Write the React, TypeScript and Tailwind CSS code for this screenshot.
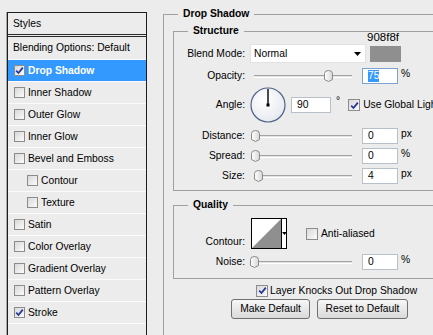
import React from "react";

function Check({ checked = false, big = false }: { checked?: boolean; big?: boolean }) {
  return (
    <div
      className={
        (big ? "w-[12px] h-[12px] " : "w-[11px] h-[11px] ") +
        "shrink-0 border border-[#8c8c8c] bg-gradient-to-br from-[#d9d9d9] to-[#fbfbfb] flex items-center justify-center"
      }
    >
      {checked && (
        <svg width="9" height="9" viewBox="0 0 9 9">
          <path d="M1.2 4.6 L3.5 7 L7.8 1.6" fill="none" stroke="#23389a" strokeWidth="1.8" />
        </svg>
      )}
    </div>
  );
}

function Row({
  label,
  checked = false,
  nested = false,
  active = false,
}: {
  label: string;
  checked?: boolean;
  nested?: boolean;
  active?: boolean;
}) {
  return (
    <div
      className={
        "h-[22px] flex items-center gap-[3px] border-b border-[#fbfbfb] " +
        (nested ? "pl-[19px] " : "pl-[6px] ") +
        (active ? "bg-[#3399ff] text-white font-bold" : "")
      }
    >
      <Check checked={checked} />
      <span>{label}</span>
    </div>
  );
}

function Slider({ thumb }: { thumb: number }) {
  return (
    <div className="relative w-[107px] h-[14px] shrink-0">
      <div className="absolute left-[4px] right-[5px] top-[6px] h-[3px] border-t border-[#a3a3a3] bg-[#e2e2e2] border-b border-b-white" />
      <svg
        className="absolute top-[1px]"
        style={{ left: thumb - 4.5 }}
        width="9"
        height="12"
        viewBox="0 0 9 12"
      >
        <defs>
          <linearGradient id="tg" x1="0" y1="0" x2="1" y2="0">
            <stop offset="0" stopColor="#ffffff" />
            <stop offset="1" stopColor="#d8d8d8" />
          </linearGradient>
        </defs>
        <path
          d="M0.5 3.5 Q0.5 0.5 4.5 0.5 Q8.5 0.5 8.5 3.5 L8.5 9.5 L4.5 11.5 L0.5 9.5 Z"
          fill="url(#tg)"
          stroke="#8a8a8a"
          strokeWidth="1"
        />
      </svg>
    </div>
  );
}

function Field({ value, w = "w-[36px]", focus = false }: { value: string; w?: string; focus?: boolean }) {
  return (
    <div
      className={
        w +
        " h-[16px] shrink-0 bg-white border flex items-center pl-[5px] " +
        (focus ? "border-[#7da2ce]" : "border-[#b8c0ca]")
      }
    >
      {focus ? <span className="bg-[#3399ff] text-white leading-[12px]">{value}</span> : <span>{value}</span>}
    </div>
  );
}

function Label({ children }: { children: React.ReactNode }) {
  return <div className="w-[72px] shrink-0 text-right pr-[1px]">{children}</div>;
}

export default function App() {
  return (
    <div className="w-[433px] h-[335px] overflow-hidden bg-[#ececec] flex text-[10.3px] leading-[12px] text-black font-['Liberation_Sans',Arial,sans-serif]">
      {/* Styles list */}
      <div className="ml-[7px] mt-[12px] w-[140px] h-[340px] shrink-0 border border-[#1e1e1e] shadow-[-1px_0_0_#a8a8a8]">
        <div className="h-[24px] flex items-center pl-[5px] border-b-[3px] border-double border-[#2a2a2a]">Styles</div>
        <div className="h-[23px] flex items-center pl-[5px] border-b border-[#fbfbfb]">Blending Options: Default</div>
        <Row label="Drop Shadow" checked active />
        <Row label="Inner Shadow" />
        <Row label="Outer Glow" />
        <Row label="Inner Glow" />
        <Row label="Bevel and Emboss" />
        <Row label="Contour" nested />
        <Row label="Texture" nested />
        <Row label="Satin" />
        <Row label="Color Overlay" />
        <Row label="Gradient Overlay" />
        <Row label="Pattern Overlay" />
        <Row label="Stroke" checked />
        <div className="h-[22px]" />
      </div>

      {/* Right side */}
      <div className="ml-[16px] w-[330px] shrink-0">
        <fieldset className="mt-[8px] border-t border-l border-[#a0a0a0] min-w-0 h-[340px]">
          <legend className="ml-[14px] px-[5px] font-bold leading-[12px]">Drop Shadow</legend>

          {/* Structure */}
          <fieldset className="ml-[9px] mt-[5px] w-[310px] border border-[#a0a0a0] pt-[7px] pb-[6px] min-w-0">
            <legend className="ml-[14px] px-[5px] font-bold leading-[12px]">Structure</legend>

            <div className="flex items-center h-[19px]">
              <Label>Blend Mode:</Label>
              <div className="ml-[4px] w-[116px] h-[19px] bg-white border border-[#e2e2e2] flex items-center justify-between pl-[3px] pr-[4px]">
                <span>Normal</span>
                <svg width="7" height="4" viewBox="0 0 7 4">
                  <path d="M0 0 L7 0 L3.5 4 Z" fill="#000" />
                </svg>
              </div>
              <div className="relative ml-[4px] w-[31px] h-[16px] bg-[#908f8f]">
                <span className="absolute left-[-3px] top-[-15px] text-[11.5px] leading-[12px]">908f8f</span>
              </div>
            </div>

            <div className="flex items-center h-[16px] mt-[5px]">
              <Label>Opacity:</Label>
              <div className="ml-[4px] flex items-center">
                <Slider thumb={78} />
                <div className="ml-[5px]">
                  <Field value="75" focus />
                </div>
                <span className="ml-[3px] self-start">%</span>
              </div>
            </div>

            <div className="flex items-center h-[36px] mt-[3px]">
              <Label>Angle:</Label>
              <svg className="ml-[4px] shrink-0" width="36" height="36" viewBox="0 0 36 36">
                <defs>
                  <radialGradient id="dial" cx="0.4" cy="0.35" r="0.7">
                    <stop offset="0" stopColor="#ffffff" />
                    <stop offset="1" stopColor="#e4e8ee" />
                  </radialGradient>
                </defs>
                <circle cx="18" cy="18" r="17" fill="url(#dial)" stroke="#4d6086" strokeWidth="1.2" />
                <line x1="18" y1="18" x2="18" y2="2" stroke="#000" strokeWidth="1.4" />
                <rect x="16.5" y="16.5" width="3" height="3" fill="#000" />
              </svg>
              <div className="ml-[5px]">
                <Field value="90" w="w-[40px]" />
              </div>
              <span className="ml-[5px] self-start mt-[8px]">°</span>
              <div className="ml-[8px] flex items-center gap-[3px] whitespace-nowrap">
                <Check checked big />
                <span>Use Global Light</span>
              </div>
            </div>

            <div className="flex items-center h-[16px] mt-[5px]">
              <Label>Distance:</Label>
              <div className="ml-[4px] flex items-center">
                <Slider thumb={5} />
                <div className="ml-[5px]">
                  <Field value="0" />
                </div>
                <span className="ml-[3px] self-start">px</span>
              </div>
            </div>

            <div className="flex items-center h-[16px] mt-[4px]">
              <Label>Spread:</Label>
              <div className="ml-[4px] flex items-center">
                <Slider thumb={5} />
                <div className="ml-[5px]">
                  <Field value="0" />
                </div>
                <span className="ml-[3px] self-start">%</span>
              </div>
            </div>

            <div className="flex items-center h-[16px] mt-[4px]">
              <Label>Size:</Label>
              <div className="ml-[4px] flex items-center">
                <Slider thumb={8} />
                <div className="ml-[5px]">
                  <Field value="4" />
                </div>
                <span className="ml-[3px] self-start">px</span>
              </div>
            </div>
          </fieldset>

          {/* Quality */}
          <fieldset className="ml-[9px] mt-[8px] w-[310px] border border-[#a0a0a0] pt-[7px] pb-[8px] min-w-0">
            <legend className="ml-[14px] px-[5px] font-bold leading-[12px]">Quality</legend>

            <div className="flex items-center h-[31px]">
              <div className="w-[72px] shrink-0 text-right pr-[1px] self-end mb-[1px]">Contour:</div>
              <div className="ml-[5px] w-[36px] h-[31px] border border-black bg-white flex">
                <svg width="29" height="29" viewBox="0 0 29 29" className="shrink-0">
                  <path d="M0 29 L29 0 L29 29 Z" fill="#8f8f8f" />
                </svg>
                <div className="flex-1 border-l border-black flex items-center justify-center">
                  <svg width="5" height="3" viewBox="0 0 5 3">
                    <path d="M0 0 L5 0 L2.5 3 Z" fill="#000" />
                  </svg>
                </div>
              </div>
              <div className="ml-[19px] flex items-center gap-[3px]">
                <Check big />
                <span>Anti-aliased</span>
              </div>
            </div>

            <div className="flex items-center h-[16px] mt-[5px]">
              <Label>Noise:</Label>
              <div className="ml-[4px] flex items-center">
                <Slider thumb={4} />
                <div className="ml-[5px]">
                  <Field value="0" />
                </div>
                <span className="ml-[3px] self-start">%</span>
              </div>
            </div>
          </fieldset>

          <div className="ml-[92px] mt-[5px] h-[13px] flex items-center gap-[2px] whitespace-nowrap">
            <Check checked big />
            <span>Layer Knocks Out Drop Shadow</span>
          </div>

          <div className="ml-[67px] mt-[2px] flex gap-[7px]">
            <button className="w-[79px] h-[20px] rounded-[3px] border border-[#707070] bg-gradient-to-b from-[#f7f7f7] to-[#dadada] flex items-center justify-center">
              Make Default
            </button>
            <button className="w-[91px] h-[20px] rounded-[3px] border border-[#707070] bg-gradient-to-b from-[#f7f7f7] to-[#dadada] flex items-center justify-center">
              Reset to Default
            </button>
          </div>
        </fieldset>
      </div>
    </div>
  );
}
